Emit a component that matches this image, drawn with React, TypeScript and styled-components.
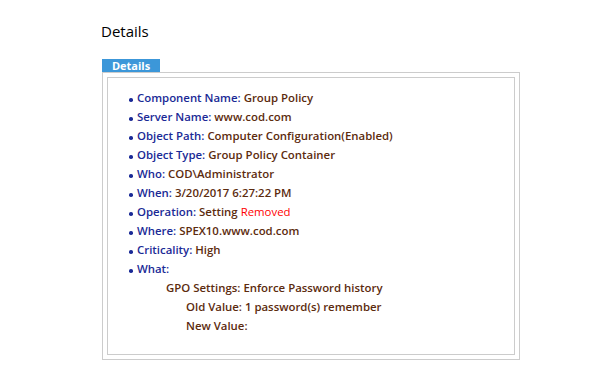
import React from "react";
import styled, { createGlobalStyle } from "styled-components";

interface Field {
  label: string;
  value: string;
  // a trailing word shown in red (the operation result)
  flag?: string;
}

const fields: Field[] = [
  { label: "Component Name", value: "Group Policy" },
  { label: "Server Name", value: "www.cod.com" },
  { label: "Object Path", value: "Computer Configuration(Enabled)" },
  { label: "Object Type", value: "Group Policy Container" },
  { label: "Who", value: "COD\\Administrator" },
  { label: "When", value: "3/20/2017 6:27:22 PM" },
  { label: "Operation", value: "Setting", flag: "Removed" },
  { label: "Where", value: "SPEX10.www.cod.com" },
  { label: "Criticality", value: "High" },
];

function App() {
  return (
    <>
      <GlobalStyle />
      <Page>
        <Title>Details</Title>
        <Tab>Details</Tab>
        <OuterBox>
          <InnerBox>
            <FieldList>
              {fields.map((f) => (
                <FieldRow key={f.label}>
                  <Label>{f.label}:</Label>{" "}
                  <Value>
                    {f.value}
                    {f.flag && (
                      <>
                        {" "}
                        <Removed>{f.flag}</Removed>
                      </>
                    )}
                  </Value>
                </FieldRow>
              ))}
              <FieldRow>
                <Label>What:</Label>
              </FieldRow>
            </FieldList>
            <SubLine $indent={58}>GPO Settings: Enforce Password history</SubLine>
            <SubLine $indent={78}>Old Value: 1 password(s) remember</SubLine>
            <SubLine $indent={78}>New Value:</SubLine>
          </InnerBox>
        </OuterBox>
      </Page>
    </>
  );
}

const GlobalStyle = createGlobalStyle`
  body {
    margin: 0;
    background: #ffffff;
    font-family: "Open Sans", "Noto Sans", sans-serif;
  }
`;

const Page = styled.div`
  padding: 20px 0 0 100px;
  width: 420px;
`;

const Title = styled.h1`
  margin: 0 0 0 1px;
  font-size: 15px;
  font-weight: 400;
  line-height: 22px;
  color: #000000;
`;

const Tab = styled.div`
  margin: 17px 0 0 2px;
  width: 58px;
  height: 13px;
  background: #3c97d9;
  color: #ffffff;
  font-size: 11px;
  font-weight: 700;
  line-height: 13px;
  text-align: center;
`;

const OuterBox = styled.div`
  margin-left: 2px;
  width: 408px;
  height: 279px;
  border: 1px solid #cccccc;
  padding: 4px 4px 3px 4px;
`;

const InnerBox = styled.div`
  height: 278px;
  border: 1px solid #cccccc;
  padding-top: 10px;
  box-sizing: border-box;
  font-size: 11.4px;
  font-weight: 600;
  line-height: 19px;
`;

const FieldList = styled.ul`
  margin: 0;
  padding: 0 0 0 29px;
  list-style: none;
`;

const FieldRow = styled.li`
  position: relative;
  &::before {
    content: "";
    position: absolute;
    left: -8px;
    top: 10px;
    width: 3.5px;
    height: 3.5px;
    border-radius: 50%;
    background: #1a2a96;
  }
`;

const Label = styled.span`
  color: #1a2a96;
`;

const Value = styled.span`
  color: #5c2b0e;
`;

const Removed = styled.span`
  color: #ff0000;
  font-weight: 400;
`;

const SubLine = styled.div<{ $indent: number }>`
  padding-left: ${(p) => p.$indent}px;
  color: #5c2b0e;
`;

export default App;
